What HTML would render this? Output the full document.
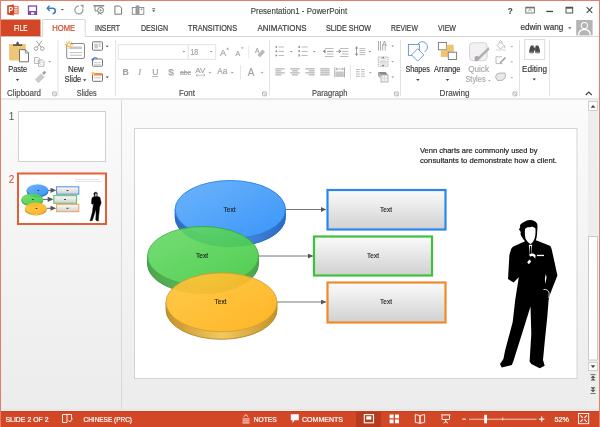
<!DOCTYPE html>
<html><head><meta charset="utf-8">
<style>
*{margin:0;padding:0}
html,body{width:600px;height:427px;overflow:hidden;background:#fff}
svg{position:absolute;left:0;top:0;font-family:"Liberation Sans",sans-serif;will-change:transform}
</style></head><body>
<svg width="600" height="427" viewBox="0 0 600 427">
<defs>
<linearGradient id="gBlue" x1="0" y1="0" x2="1" y2="1"><stop offset="0" stop-color="#6CB4FC"/><stop offset="1" stop-color="#3B95F8"/></linearGradient>
<linearGradient id="gBlueS" x1="0" y1="0" x2="1" y2="0"><stop offset="0" stop-color="#2A6CC4"/><stop offset=".5" stop-color="#4A8EE0"/><stop offset="1" stop-color="#2A6CC4"/></linearGradient>
<linearGradient id="gGreen" x1="0" y1="0" x2="1" y2="1"><stop offset="0" stop-color="#68DA68"/><stop offset="1" stop-color="#3FC93F"/></linearGradient>
<linearGradient id="gGreenS" x1="0" y1="0" x2="1" y2="0"><stop offset="0" stop-color="#369C36"/><stop offset=".5" stop-color="#52B852"/><stop offset="1" stop-color="#369C36"/></linearGradient>
<linearGradient id="gOr" x1="0" y1="0" x2="1" y2="1"><stop offset="0" stop-color="#FFC63E"/><stop offset="1" stop-color="#FFB014"/></linearGradient>
<linearGradient id="gOrS" x1="0" y1="0" x2="1" y2="0"><stop offset="0" stop-color="#C08A18"/><stop offset=".5" stop-color="#F2C452"/><stop offset="1" stop-color="#C08A18"/></linearGradient>
<linearGradient id="gMain" x1="0" y1="0" x2="0" y2="1"><stop offset="0" stop-color="#FBFBFB"/><stop offset="1" stop-color="#ECECEC"/></linearGradient>
<linearGradient id="gBox" x1="0" y1="0" x2="0" y2="1"><stop offset="0" stop-color="#FBFBFB"/><stop offset="1" stop-color="#D0D0D0"/></linearGradient>
<marker id="arr" viewBox="0 0 10 10" refX="10" refY="5" markerWidth="6" markerHeight="5" markerUnits="userSpaceOnUse" orient="auto"><path d="M0,0 L10,5 L0,10 Z" fill="#555"/></marker>
<g id="discs">
 <g>
  <path d="M175.1,209.5 v8 a55.2,29 0 0 0 110.4,0 v-8 z" fill="url(#gBlueS)" stroke="#2566BA" stroke-width="0.9"/>
  <ellipse cx="230.3" cy="209.5" rx="55.2" ry="29" fill="url(#gBlue)" stroke="#2D7EDC" stroke-width="0.9"/>
 </g>
 <g opacity="0.9">
  <path d="M147.5,256 v8 a55.5,29.5 0 0 0 111,0 v-8 z" fill="url(#gGreenS)" stroke="#2C8A2C" stroke-width="0.9"/>
  <ellipse cx="203" cy="256" rx="55.5" ry="29.5" fill="url(#gGreen)" stroke="#34A834" stroke-width="0.9"/>
 </g>
 <g opacity="0.92">
  <path d="M166,302.3 v7.5 a55.5,29.5 0 0 0 111,0 v-7.5 z" fill="url(#gOrS)" stroke="#A87A14" stroke-width="0.9"/>
  <ellipse cx="221.5" cy="302.3" rx="55.5" ry="29.5" fill="url(#gOr)" stroke="#D09A22" stroke-width="0.9"/>
 </g>
</g>
<g id="mansil">
 <path fill="#000" d="M528.7,220.2 C532,219.6 535.5,220.8 537,223.5 C538,226 537.2,228.5 537.2,231.5 C537,236 536.5,239 535.8,240.2 L543,243 L550.4,246 L551.6,249 L554.5,262 L557.4,275.5 L551.6,290.2 L549.5,296 L548.6,300 L547.3,317 L544.7,342 L543,360 L544.7,365.8 L539.7,368.3 L531.3,364 L529.6,361.5 L531.3,333.7 L530.5,306.5 L522,333.7 L513.5,360.7 L511.9,365 L501.7,367.5 L500,364 L503.4,359 L505.1,350.6 L512.7,321.9 L515.2,300 L518.8,277.3 L513.5,282.5 L508,279 L509.4,255 L511.1,249 L512.9,246.7 L525,241.3 L523.5,239.5 L521.5,236.5 L520.5,234 L520.8,232 L519,229.5 L520.2,227 L520,225 L522.5,222.8 L525,221.6 C526.5,220.6 527.5,220.3 528.7,220.2 Z"/>
</g>
<g id="man">
 <use href="#mansil"/>
 <path fill="#fff" d="M525,229 C526,227.6 527.5,227 529.5,227.2 C531,226.6 533.5,226.2 535.5,228.5 L535.5,233 C535.3,237 534.5,240 532,243 L530.5,244 C528.5,243 526.5,240.5 525.4,238.5 C524.8,235 524.8,231.5 525,229 Z"/>
 <path fill="#fff" d="M528.8,244.8 L532.2,244.8 L531.4,256 L529.8,256 Z"/>
 <path fill="#000" d="M529.9,246 L531.3,246 L531.6,254 L530.6,256 L529.7,254 Z"/>
 <rect x="537" y="254.8" width="7" height="1.3" fill="#fff"/>
 <path fill="#fff" d="M529.3,254.8 C531,253 534,252.8 535.6,255.3 L535.2,258.8 L533.8,256.8 C532.8,255.6 531.2,255.6 530,256.8 Z"/>
 <path fill="#fff" d="M527.2,262.2 L529.4,259.4 L531.2,261.6 L528.8,264.2 Z"/>
 <path fill="#fff" d="M545.7,274.3 L546.6,277 L545.4,284 L544.9,279 Z"/>
 <path fill="none" stroke="#fff" stroke-width="0.8" d="M543.4,289.6 C546,289 548.5,290 549.2,293 L548.8,298"/>
</g>
<g id="slide">
 <text x="420" y="152.8" font-size="7.9" fill="#1A1A1A" stroke="#1A1A1A" stroke-width="0.18" textLength="117.5" lengthAdjust="spacingAndGlyphs">Venn charts are commonly used by</text>
 <text x="420" y="162.7" font-size="7.9" fill="#1A1A1A" stroke="#1A1A1A" stroke-width="0.18" textLength="137" lengthAdjust="spacingAndGlyphs">consultants to demonstrate how a client.</text>
 <g stroke="#777" stroke-width="1">
 <line x1="286" y1="209.5" x2="326" y2="209.5" marker-end="url(#arr)"/>
 <line x1="258" y1="256" x2="313" y2="256" marker-end="url(#arr)"/>
 <line x1="277" y1="302" x2="326" y2="302" marker-end="url(#arr)"/>
 </g>
 <rect x="327.5" y="190" width="118" height="39.5" fill="url(#gBox)" stroke="#2A86EE" stroke-width="2.2"/>
 <rect x="314" y="236.5" width="118" height="39" fill="url(#gBox)" stroke="#3EC23E" stroke-width="2.2"/>
 <rect x="327.5" y="282.5" width="118" height="40" fill="url(#gBox)" stroke="#EE8A2C" stroke-width="2.2"/>
 <g font-size="6.5" fill="#1A1A1A" stroke="#1A1A1A" stroke-width="0.12" text-anchor="middle">
 <text x="386" y="211.5">Text</text>
 <text x="373" y="258">Text</text>
 <text x="386" y="304">Text</text>
 </g>
 <use href="#discs"/>
 <g font-size="6.5" fill="#1A1A1A" stroke="#1A1A1A" stroke-width="0.12" text-anchor="middle">
 <text x="229.5" y="211.5">Text</text>
 <text x="202" y="258">Text</text>
 <text x="220.5" y="304">Text</text>
 </g>
 <use href="#man"/>
</g>
<g id="thumb">
 <g fill="#E2E4E8">
 <rect x="75" y="179" width="24" height=".9"/>
 <rect x="75" y="181" width="27" height=".9"/>
 </g>
 <g fill="url(#gBox)" stroke-width="1">
 <rect x="56.6" y="186.8" width="22.2" height="7.4" stroke="#4A90E2"/>
 <rect x="53.8" y="195.7" width="22.8" height="7.6" stroke="#58C058"/>
 <rect x="56.6" y="204.3" width="22.2" height="7.4" stroke="#EDA060"/>
 </g>
 <g fill="#555">
 <rect x="48" y="189.9" width="3" height=".9"/><path d="M50.5,187.8 L56.2,190.35 L50.5,192.9 Z"/>
 <rect x="43" y="198.9" width="5" height=".9"/><path d="M47.7,196.8 L53.4,199.35 L47.7,201.9 Z"/>
 <rect x="47" y="207.8" width="4" height=".9"/><path d="M50.5,205.7 L56.2,208.25 L50.5,210.8 Z"/>
 </g>
 <g fill="#444">
 <rect x="66.5" y="190" width="2" height="1"/><rect x="64" y="199" width="2" height="1"/><rect x="66.5" y="207.8" width="2" height="1"/>
 </g>
 <g transform="translate(19,174.5) scale(0.1945) translate(-135,-129)"><use href="#discs"/><g stroke="#000" stroke-width="2.5"><use href="#mansil"/></g><path d="M525,229 C526,227.6 527.5,227 529.5,227.2 C531,226.6 533.5,226.2 535.5,228.5 L535.5,233 C535.3,237 534.5,240 532,243 L530.5,244 C528.5,243 526.5,240.5 525.4,238.5 C524.8,235 524.8,231.5 525,229 Z" fill="#fff" opacity=".7"/></g>
 <g fill="#333">
 <rect x="37.5" y="190" width="1.6" height="1"/><rect x="32" y="199" width="1.6" height="1"/><rect x="35.7" y="208" width="1.6" height="1"/>
 </g>
</g>
</defs>
<!-- ===== background regions ===== -->
<rect x="0" y="0" width="600" height="427" fill="#fff"/>
<rect x="0" y="99" width="600" height="312" fill="url(#gMain)"/>
<rect x="0" y="36" width="600" height="1" fill="#D6D6D6"/>
<rect x="0" y="98" width="600" height="2" fill="#E8E8E8"/>

<!-- ===== title bar ===== -->
<g id="title">

<!-- PowerPoint logo -->
<rect x="12.5" y="6" width="6.2" height="8.3" fill="#E77B5E"/>
<path d="M14.5,7.6 h3 M14.5,9.8 h3 M14.5,12 h3" stroke="#fff" stroke-width="1"/>
<path d="M7.2,5.5 L13.9,4.5 V15.6 L7.2,14.6 Z" fill="#D04423"/>
<path d="M9.4,12.8 V7.3 H11 C12.9,7.3 12.9,10.3 11,10.3 H9.4" fill="none" stroke="#fff" stroke-width="1.2"/>
<!-- save -->
<rect x="28.5" y="6" width="8" height="8.3" fill="none" stroke="#7B4AB2" stroke-width="1.3"/>
<rect x="28.5" y="11" width="8" height="3.3" fill="#7B4AB2"/>
<rect x="31" y="12.3" width="3.2" height="2" fill="#fff"/>
<!-- undo -->
<path d="M49.6,5.6 L47.2,8.3 L49.6,11" fill="none" stroke="#3A7CC0" stroke-width="1.4"/>
<path d="M47.6,8.3 H52.5 C56.2,8.3 56.2,13.4 52.5,13.6" fill="none" stroke="#3A7CC0" stroke-width="1.5"/>
<path d="M60.8,9 h3.2 l-1.6,1.6 z" fill="#555"/>
<!-- redo -->
<path d="M78.8,6 A4,4 0 1 0 82.6,8.6" fill="none" stroke="#A0A0A0" stroke-width="1.3"/>
<path d="M80,4.8 H83.6 V8.4 Z" fill="#A0A0A0"/>
<!-- from start -->
<rect x="93.4" y="5.3" width="10.8" height="1.1" fill="#555"/>
<path d="M95,6.4 V11 H97.5" fill="none" stroke="#666" stroke-width=".8"/>
<circle cx="100.6" cy="10.3" r="2.9" fill="#fff" stroke="#666" stroke-width=".9"/>
<path d="M99.8,8.8 L102,10.3 L99.8,11.8 Z" fill="#3BAA5A"/>
<path d="M97.5,14.6 L99.5,12.8 L101.5,14.6" fill="none" stroke="#666" stroke-width=".8"/>
<!-- new doc -->
<path d="M114.9,6 H119.5 L121.6,8.1 V14.2 H114.9 Z" fill="#fff" stroke="#666" stroke-width=".9"/>
<!-- touch -->
<rect x="132.3" y="7.5" width="11.5" height="6.8" fill="none" stroke="#888" stroke-width=".9"/>
<path d="M135.5,14 V7 C135.5,4.5 139.5,4.5 139.5,7 V14 Z" fill="#999"/>
<circle cx="141.6" cy="9.2" r=".7" fill="#2E7BD6"/>
<!-- qat customize -->
<rect x="152.2" y="8.4" width="3" height=".8" fill="#444"/>
<path d="M152.2,10.3 h3 l-1.5,1.8 z" fill="#444"/>
<!-- right controls -->
<text x="507.8" y="13.7" font-size="9.6" font-weight="bold" fill="#444" stroke="#444" stroke-width="0.1" textLength="5" lengthAdjust="spacingAndGlyphs">?</text>
<rect x="525.8" y="7.2" width="8.5" height="5.8" fill="none" stroke="#666" stroke-width=".9"/>
<rect x="525.8" y="7.2" width="8.5" height="1.2" fill="#666"/>
<path d="M528.3,11 L530,9.5 L531.7,11" fill="none" stroke="#666" stroke-width=".8"/>
<rect x="546.3" y="10.8" width="6.7" height="1.3" fill="#444"/>
<rect x="566" y="7.2" width="6.7" height="5.8" fill="none" stroke="#444" stroke-width=".9"/>
<rect x="566" y="7.2" width="6.7" height="1.4" fill="#444"/>
<path d="M586.6,7.2 L592.3,12.9 M592.3,7.2 L586.6,12.9" stroke="#444" stroke-width="1.1"/>
<text x="250.8" y="13.5" font-size="8.9" fill="#444" textLength="96.4" lengthAdjust="spacingAndGlyphs" stroke="#444" stroke-width="0.15">Presentation1 - PowerPoint</text>
</g>

<!-- ===== tabs ===== -->
<g id="tabs" font-size="8.6" fill="#3C3C3C" stroke="#3C3C3C" stroke-width="0.2">
<rect x="0" y="19.5" width="40.5" height="16.7" fill="#D24726" stroke="none"/>
<path d="M42.7,37 V19.5 H85.2 V37" fill="#fff" stroke="#D6D6D6" stroke-width="1"/><rect x="43.2" y="35" width="41.5" height="2.2" fill="#fff" stroke="none"/>
<text x="14" y="31.1" fill="#fff" stroke="#fff" textLength="13.4" lengthAdjust="spacingAndGlyphs">FILE</text>
<text x="52.2" y="31.1" fill="#D24726" stroke="#D24726" textLength="23" lengthAdjust="spacingAndGlyphs">HOME</text>
<text x="95" y="31.1" textLength="25" lengthAdjust="spacingAndGlyphs">INSERT</text>
<text x="141" y="31.1" textLength="27" lengthAdjust="spacingAndGlyphs">DESIGN</text>
<text x="188" y="31.1" textLength="49" lengthAdjust="spacingAndGlyphs">TRANSITIONS</text>
<text x="257.5" y="31.1" textLength="49" lengthAdjust="spacingAndGlyphs">ANIMATIONS</text>
<text x="326" y="31.1" textLength="45" lengthAdjust="spacingAndGlyphs">SLIDE SHOW</text>
<text x="391" y="31.1" textLength="26.8" lengthAdjust="spacingAndGlyphs">REVIEW</text>
<text x="438" y="31.1" textLength="18" lengthAdjust="spacingAndGlyphs">VIEW</text>
<text x="520.4" y="30.3" font-size="8.3" textLength="42.8" lengthAdjust="spacingAndGlyphs">edwin wang</text>
<path d="M568,27.3 h3.5 l-1.75,2 z" fill="#666" stroke="none"/>
<rect x="576.2" y="20" width="16.4" height="15.3" fill="#B4B4B4" stroke="none"/>
<g stroke="none" fill="#fff"><circle cx="584.4" cy="25.6" r="3.6"/><path d="M578,35.3 C578,30.5 580.5,29 584.4,29 C588.3,29 590.8,30.5 590.8,35.3 Z"/></g><circle cx="584.4" cy="25.6" r="2.6" fill="#B4B4B4" stroke="none"/><path d="M579.2,35.3 C579.4,31.5 581.3,30.2 584.4,30.2 C587.5,30.2 589.4,31.5 589.6,35.3 Z" fill="#B4B4B4" stroke="none"/>
</g>

<!-- ===== ribbon ===== -->
<g id="ribbon" font-size="8.2" fill="#4A4A4A">

<!-- Clipboard group -->
<path d="M9.1,44 H25.8 V60.6 H10.6 Q9.1,60.6 9.1,59 Z" fill="#EEC676"/>
<path d="M13,46 V44.2 H16 Q16.5,41.6 17.6,41.6 Q18.7,41.6 19.2,44.2 H22.2 V46 Z" fill="#5A5A5A"/>
<path d="M19.5,49.7 H25.3 L28.5,52.9 V61.8 H19.5 Z" fill="#fff" stroke="#666" stroke-width=".9"/>
<path d="M25.3,49.7 V52.9 H28.5" fill="none" stroke="#666" stroke-width=".7"/>
<text x="8.2" y="72.3" font-size="8.2" fill="#333" textLength="19" lengthAdjust="spacingAndGlyphs" stroke="#333" stroke-width="0.15">Paste</text>
<path d="M15.7,79 h3.6 l-1.8,2 z" fill="#444"/>
<g fill="none" stroke="#999" stroke-width=".9">
<circle cx="36" cy="48.6" r="1.8"/><circle cx="42.3" cy="48.6" r="1.8"/>
<path d="M37.2,47.2 L42,40.8 M41.1,47.2 L36.3,40.8"/>
<path d="M34.5,57.5 H38.5 L39.8,58.8 V63.5 H34.5 Z M38.5,60 H42.5 L44,61.5 V66.4 H38.5 Z" fill="#fff" stroke="#B0B0B0"/><path d="M35.8,60 h2.5 M35.8,61.8 h2.5 M39.8,62.5 h2.8 M39.8,64.3 h2.8" stroke="#C8C8C8" stroke-width=".6"/>
</g>
<path d="M48.4,61 h2.6 l-1.3,1.4 z" fill="#999"/>
<path d="M35,79.5 L41,73.5 L44.5,77 L38.5,83 Z" fill="#C4C4C4"/>
<path d="M36.5,79.5 L41.5,74.5 M38,81 L43,76" stroke="#E8E8E8" stroke-width=".6"/>
<path d="M42,73 L44.5,70.8 L46.2,72.5 L44,75 Z" fill="#A0A0A0"/>
<!-- Slides group -->
<rect x="66.7" y="43.5" width="17.8" height="15" rx="1.5" fill="#fff" stroke="#8A8A8A" stroke-width="1"/>
<rect x="70" y="46.5" width="12" height="2.6" fill="#C8C8C8"/>
<rect x="70" y="52.2" width="12" height=".9" fill="#B8B8B8"/>
<rect x="70" y="54.8" width="12" height=".9" fill="#B8B8B8"/>
<g stroke="#F0B030" stroke-width=".9"><circle cx="69.0" cy="44.8" r="2" fill="#FFF6DC"/><path d="M71.60,44.80 L73.20,44.80 M70.84,46.64 L71.97,47.77 M69.00,47.40 L69.00,49.00 M67.16,46.64 L66.03,47.77 M66.40,44.80 L64.80,44.80 M67.16,42.96 L66.03,41.83 M69.00,42.20 L69.00,40.60 M70.84,42.96 L71.97,41.83 "/></g>
<text x="67.9" y="72.3" font-size="8.2" fill="#333" textLength="15.9" lengthAdjust="spacingAndGlyphs" stroke="#333" stroke-width="0.15">New</text>
<text x="64.5" y="81.8" font-size="8.2" fill="#333" textLength="16.8" lengthAdjust="spacingAndGlyphs" stroke="#333" stroke-width="0.15">Slide</text>
<path d="M82.8,79.3 h3.6 l-1.8,2 z" fill="#444"/>
<rect x="92.5" y="41.8" width="10" height="8.4" rx=".8" fill="#fff" stroke="#666" stroke-width=".9"/>
<rect x="94.3" y="43.6" width="3.5" height="4.8" fill="#C8C8C8"/>
<rect x="98.6" y="43.6" width="2.3" height="1" fill="#AAA"/><rect x="98.6" y="45.6" width="2.3" height="1" fill="#AAA"/>
<path d="M105.7,45.7 h3 l-1.5,1.6 z" fill="#444"/>
<rect x="92.5" y="59" width="10" height="7.2" rx=".8" fill="#fff" stroke="#666" stroke-width=".9"/>
<path d="M94,62.5 h7 M94,64.3 h7" stroke="#BBB" stroke-width=".7"/>
<path d="M92.2,60.3 Q94,56.3 97.5,58.5" fill="none" stroke="#2E75C6" stroke-width="1.1"/>
<path d="M91,58.8 L92.5,61.5 L94.3,59.6 Z" fill="#2E75C6"/>
<rect x="92.5" y="73.8" width="10" height="7.5" rx=".8" fill="#fff" stroke="#666" stroke-width=".9"/>
<rect x="94" y="73" width="8.5" height="2.6" fill="#F08A54"/>
<path d="M94,77.8 h7" stroke="#AAA" stroke-width=".7"/>
<circle cx="93" cy="73.3" r="1.6" fill="#F6C760"/>
<path d="M105.7,76.6 h3 l-1.5,1.6 z" fill="#444"/>
<!-- Font group -->
<rect x="118.3" y="44.7" width="70" height="14.6" fill="#fff" stroke="#E3E3E3" stroke-width="1"/>
<rect x="188.3" y="44.7" width="27.4" height="14.6" fill="#fff" stroke="#E3E3E3" stroke-width="1"/>
<path d="M182.5,51 h2.8 l-1.4,1.5 z M209.8,51 h2.8 l-1.4,1.5 z" fill="#999"/>
<text x="190.4" y="55" font-size="8.8" fill="#A0A0A0" textLength="7.8" lengthAdjust="spacingAndGlyphs" stroke="#A0A0A0" stroke-width="0.15">18</text>
<g fill="#A0A0A0" stroke="#A0A0A0" stroke-width="0.15">
<text x="220" y="55.5" font-size="9.2">A</text>
<path d="M226.3,49.4 L227.6,47.6 L228.9,49.4 Z"/>
<text x="235.5" y="55.5" font-size="7">A</text>
<path d="M241.2,47.4 L242.4,49 L243.6,47.4 Z"/>
<rect x="248.4" y="45.3" width=".8" height="13.3" fill="#E2E2E2" stroke="none"/>
<text x="255" y="52.5" font-size="6.5">A</text>
<path d="M257.5,55 L262.5,49.5 L265,52 L260,57.3 Z" fill="#B8B8B8" stroke="none"/>
<text x="122.5" y="75.2" font-size="8.6" font-weight="bold">B</text>
<text x="138.3" y="75.2" font-size="8.8" font-style="italic" font-family="Liberation Serif">I</text>
<text x="152.2" y="75.2" font-size="8.6">U</text>
<rect x="152.3" y="76.2" width="5.8" height=".7"/>
<text x="168.8" y="76" font-size="8.6" fill="#C8C8C8" stroke="#C8C8C8" stroke-width="0.15">S</text>
<text x="168" y="75.2" font-size="8.6">S</text>
<text x="180" y="75.2" font-size="7.2" textLength="11" lengthAdjust="spacingAndGlyphs">abc</text>
<rect x="180" y="72.3" width="11" height=".7"/>
<text x="195.3" y="72.8" font-size="7.4" textLength="10" lengthAdjust="spacingAndGlyphs">AV</text>
<path d="M196,75.2 H205 M197.5,73.9 L196,75.2 L197.5,76.5 M203.5,73.9 L205,75.2 L203.5,76.5" fill="none" stroke="#A0A0A0" stroke-width=".6"/>
<path d="M208.7,72 h2.6 l-1.3,1.4 z"/>
<text x="217.3" y="74.2" font-size="8.8" textLength="10" lengthAdjust="spacingAndGlyphs">Aa</text>
<path d="M230.9,72 h2.6 l-1.3,1.4 z"/>
<rect x="240" y="65" width=".8" height="14.5" fill="#E2E2E2" stroke="none"/>
<text x="247.8" y="75.7" font-size="10.6" textLength="6.6" lengthAdjust="spacingAndGlyphs">A</text>
<path d="M260.7,72 h2.6 l-1.3,1.4 z"/>
</g>
<g fill="none" stroke="#999" stroke-width=".7"><path d="M52.5,95.5 V92 H56.3 V95.8 H53.0"/><path d="M53.7,93.2 L55.5,95" /><path d="M262.5,95.5 V92 H266.3 V95.8 H263.0"/><path d="M263.7,93.2 L265.5,95" /><path d="M394.5,95.5 V92 H398.3 V95.8 H395.0"/><path d="M395.7,93.2 L397.5,95" /><path d="M513,95.5 V92 H516.8 V95.8 H513.5"/><path d="M514.2,93.2 L516,95" /></g>
<!-- Paragraph group -->
<g fill="#8A8A8A">
<rect x="275.5" y="46.2" width="1.6" height="1.6"/><rect x="275.5" y="50.5" width="1.6" height="1.6"/><rect x="275.5" y="54.7" width="1.6" height="1.6"/>
<rect x="278.5" y="46.6" width="5.5" height=".8" fill="#AAA"/><rect x="278.5" y="50.9" width="5.5" height=".8" fill="#AAA"/><rect x="278.5" y="55.1" width="5.5" height=".8" fill="#AAA"/>
<path d="M290,51 h2.6 l-1.3,1.4 z"/>
<rect x="298.5" y="45.8" width="1.4" height="2.2"/><rect x="298.5" y="50" width="1.4" height="2.2"/><rect x="298.5" y="54.3" width="1.4" height="2.2"/>
<rect x="301.5" y="46.6" width="6.2" height=".8" fill="#AAA"/><rect x="301.5" y="50.9" width="6.2" height=".8" fill="#AAA"/><rect x="301.5" y="55.1" width="6.2" height=".8" fill="#AAA"/>
<path d="M313,51 h2.6 l-1.3,1.4 z"/>
<rect x="325" y="48" width="8.5" height=".8" fill="#AAA"/><rect x="327" y="50.9" width="6.5" height=".8"/><rect x="327" y="53.6" width="6.5" height=".8" fill="#AAA"/><rect x="325" y="56.2" width="8.5" height=".8" fill="#AAA"/>
<path d="M322.7,51.3 L325.5,49.2 V53.4 Z M328,51 h-3" />
<rect x="340" y="48" width="8.5" height=".8" fill="#AAA"/><rect x="342" y="50.9" width="6.5" height=".8" fill="#AAA"/><rect x="342" y="53.6" width="6.5" height=".8" fill="#AAA"/><rect x="340" y="56.2" width="8.5" height=".8" fill="#AAA"/>
<path d="M341.5,51.3 L338.7,49.2 V53.4 Z M336.5,50.9 h3 v.8 h-3 z"/>
<path d="M356.6,46.3 L358.3,48.5 H354.9 Z M356.6,56 L358.3,53.8 H354.9 Z M356.2,48.5 h.8 v5.3 h-.8 z"/>
<rect x="359.5" y="48.3" width="5.8" height=".8" fill="#AAA"/><rect x="359.5" y="50.3" width="5.8" height=".8" fill="#AAA"/><rect x="359.5" y="52.3" width="5.8" height=".8" fill="#AAA"/><rect x="359.5" y="54.3" width="5.8" height=".8" fill="#AAA"/>
<path d="M368.6,51 h2.6 l-1.3,1.4 z"/>
<rect x="275.3" y="68.5" width="9.4" height=".8"/><rect x="275.3" y="70.5" width="6" height=".8"/><rect x="275.3" y="72.5" width="9.4" height=".8"/><rect x="275.3" y="74.5" width="6" height=".8"/>
<rect x="290.3" y="68.5" width="9.4" height=".8"/><rect x="292" y="70.5" width="6" height=".8"/><rect x="290.3" y="72.5" width="9.4" height=".8"/><rect x="292" y="74.5" width="6" height=".8"/>
<rect x="305.3" y="68.5" width="9.4" height=".8"/><rect x="308.7" y="70.5" width="6" height=".8"/><rect x="305.3" y="72.5" width="9.4" height=".8"/><rect x="308.7" y="74.5" width="6" height=".8"/>
<rect x="320.3" y="68.5" width="9.4" height=".8"/><rect x="320.3" y="70.5" width="9.4" height=".8"/><rect x="320.3" y="72.5" width="9.4" height=".8"/><rect x="320.3" y="74.5" width="9.4" height=".8"/>
<rect x="334.5" y="67.3" width=".7" height="10"/><rect x="344" y="67.3" width=".7" height="10"/>
<rect x="335.5" y="71.5" width="8.3" height="5.5" fill="#C8C8C8"/>
<path d="M336,69 H343.5 M337.3,67.9 L336,69 L337.3,70.1 M342.2,67.9 L343.5,69 L342.2,70.1" fill="none" stroke="#8A8A8A" stroke-width=".6"/>
<rect x="350" y="65" width=".8" height="14.5" fill="#E2E2E2" stroke="none"/>
<rect x="356" y="69.2" width="3.8" height=".8" fill="#AAA"/><rect x="360.9" y="69.2" width="3.8" height=".8" fill="#AAA"/>
<rect x="356" y="71.4" width="3.8" height=".8" fill="#AAA"/><rect x="360.9" y="71.4" width="3.8" height=".8" fill="#AAA"/>
<rect x="356" y="73.6" width="3.8" height=".8" fill="#AAA"/><rect x="360.9" y="73.6" width="3.8" height=".8" fill="#AAA"/>
<rect x="356" y="75.8" width="3.8" height=".8" fill="#AAA"/><rect x="360.9" y="75.8" width="3.8" height=".8" fill="#AAA"/>
<path d="M369,72.2 h2.6 l-1.3,1.4 z"/>
<rect x="378" y="41" width=".7" height="9.5"/><rect x="380.2" y="41" width=".7" height="9.5"/><rect x="382.4" y="45" width=".7" height="5.5"/><rect x="384.8" y="45" width=".7" height="5.5"/>
<text x="382.2" y="46" font-size="6.5" fill="#999" stroke="#999" stroke-width="0.15">A</text>
<path d="M391.4,45.6 h2.6 l-1.3,1.4 z"/>
<rect x="378.3" y="57" width="9.7" height="9.3" fill="#F4F0F6" stroke="#999" stroke-width=".7" stroke-dasharray="1.5,.8"/>
<path d="M383.1,56.5 L384.8,58.6 H381.4 Z M383.1,66.8 L384.8,64.7 H381.4 Z"/>
<rect x="380" y="60.8" width="6.4" height=".6" fill="#BBB"/><rect x="380" y="62.6" width="6.4" height=".6" fill="#BBB"/>
<path d="M391.4,61.2 h2.6 l-1.3,1.4 z"/>
<path d="M378,72 H385.5 L388,74.7 H380.5 Z" fill="#8A8A8A"/>
<path d="M378,72 L380.5,74.7 V78 L378,76 Z" fill="#AAA"/>
<rect x="381" y="75" width="7" height="7" fill="#F4F0F6" stroke="#999" stroke-width=".7"/>
<path d="M384.5,75.5 V81.5 M381.5,78.5 H387.5" stroke="#CCC" stroke-width=".5"/>
<path d="M391.4,76.6 h2.6 l-1.3,1.4 z"/>
</g>
<!-- Drawing group -->
<g fill="none" stroke="#5B92D4" stroke-width=".9">
<rect x="408.4" y="44.4" width="11" height="11"/>
<path d="M417.6,44.4 A5.3,5.3 0 1 1 424.5,51.8"/>
<path d="M417.7,48.7 L423.9,54.9 L417.7,61.1 L411.5,54.9 Z" fill="#fff"/>
</g>
<text x="405.4" y="71.9" font-size="8.2" fill="#333" textLength="24.5" lengthAdjust="spacingAndGlyphs" stroke="#333" stroke-width="0.15">Shapes</text>
<path d="M416.1,79 h3.6 l-1.8,2 z" fill="#444"/>
<rect x="438.4" y="42.5" width="8" height="7.3" fill="#fff" stroke="#777" stroke-width=".9"/>
<path d="M446.5,44.7 H453.7 V52 H448 V57.1 H440.8 V49.9 H446.5 Z" fill="#EFC46E"/>
<rect x="448.3" y="52.2" width="8.3" height="7.3" fill="#fff" stroke="#777" stroke-width=".9"/>
<text x="434" y="71.9" font-size="8.2" fill="#333" textLength="26.4" lengthAdjust="spacingAndGlyphs" stroke="#333" stroke-width="0.15">Arrange</text>
<path d="M445.7,79 h3.6 l-1.8,2 z" fill="#444"/>
<rect x="469.5" y="42.7" width="17.6" height="18" rx="3.5" fill="#F3EFF5" stroke="#CCC" stroke-width=".8"/>
<path d="M474,61 L488.6,47 L489.5,49.5 L477.5,61.2 Z" fill="#B0B0B0"/>
<circle cx="476.8" cy="58.2" r="2.3" fill="#A8A8A8"/>
<text x="468.2" y="72.3" font-size="8.2" fill="#A8A8A8" textLength="20.8" lengthAdjust="spacingAndGlyphs" stroke="#A8A8A8" stroke-width="0.15">Quick</text>
<text x="465.4" y="82.4" font-size="8.2" fill="#A8A8A8" textLength="20.2" lengthAdjust="spacingAndGlyphs" stroke="#A8A8A8" stroke-width="0.15">Styles</text>
<path d="M488,80 h2.6 l-1.3,1.4 z" fill="#AAA"/>
<path d="M497,45.5 L500.5,42 L504,45.5 L500.5,49 Z" fill="#fff" stroke="#AAA" stroke-width=".8"/>
<path d="M499,42.3 L500.5,40.5 L502.5,42.5" fill="none" stroke="#AAA" stroke-width=".8"/>
<path d="M504,45 Q506,47.5 505,48.5 Q504,47.5 504,45 Z" fill="#AAA"/>
<rect x="495.7" y="49.2" width="10.1" height="1.4" fill="#E0E0E0"/>
<path d="M510.5,46 h2.6 l-1.3,1.4 z" fill="#AAA"/>
<path d="M502,56.8 H496 V63.6 H502.6" fill="none" stroke="#AAA" stroke-width=".8"/>
<path d="M499.5,62.5 L505,57 L506,58 L500.5,63.5 Z" fill="#999"/>
<path d="M510.5,61.5 h2.6 l-1.3,1.4 z" fill="#AAA"/>
<path d="M495.5,77 Q496,73 500,73 H505 L505.5,75.5 Q505,80.5 500.5,80.5 H497.5 Z" fill="#E8E8E8" stroke="#A8A8A8" stroke-width=".8"/>
<path d="M510.5,77 h2.6 l-1.3,1.4 z" fill="#AAA"/>
<!-- Editing group -->
<rect x="524.7" y="39.5" width="20" height="20" fill="#fff" stroke="#D8D8D8" stroke-width=".9"/>
<g fill="#4A4A4A">
<path d="M529.2,52.8 C529,50 530,47.5 531,45.5 H533.6 L534,50.5 V52.8 Z"/>
<path d="M540,52.8 C540.2,50 539.2,47.5 538.2,45.5 H535.6 L535.2,50.5 V52.8 Z"/>
<rect x="533.5" y="47.5" width="2.2" height="3"/>
</g>
<g fill="#888"><ellipse cx="531.6" cy="52.6" rx="2.1" ry="1"/><ellipse cx="537.6" cy="52.6" rx="2.1" ry="1"/></g>
<text x="522" y="72" font-size="8.2" fill="#333" textLength="25" lengthAdjust="spacingAndGlyphs" stroke="#333" stroke-width="0.15">Editing</text>
<path d="M532.4,78.6 h3.6 l-1.8,2 z" fill="#444"/>
<path d="M585.8,95 L588.8,92 L591.8,95" fill="none" stroke="#444" stroke-width="1.1"/>
<text x="7" y="96" textLength="34" lengthAdjust="spacingAndGlyphs" stroke="#4A4A4A" stroke-width="0.15">Clipboard</text>
<text x="76.8" y="96" textLength="19.8" lengthAdjust="spacingAndGlyphs" stroke="#4A4A4A" stroke-width="0.15">Slides</text>
<text x="179" y="96" textLength="15.9" lengthAdjust="spacingAndGlyphs" stroke="#4A4A4A" stroke-width="0.15">Font</text>
<text x="312" y="96" textLength="35.4" lengthAdjust="spacingAndGlyphs" stroke="#4A4A4A" stroke-width="0.15">Paragraph</text>
<text x="439.5" y="96" textLength="30" lengthAdjust="spacingAndGlyphs" stroke="#4A4A4A" stroke-width="0.15">Drawing</text>
<g fill="#E2E2E2">
<rect x="57.5" y="40" width="1" height="56"/>
<rect x="115" y="40" width="1" height="56"/>
<rect x="269" y="40" width="1" height="56"/>
<rect x="400" y="40" width="1" height="56"/>
<rect x="519" y="40" width="1" height="56"/>
<rect x="549" y="40" width="1" height="56"/>
</g>
</g>

<!-- ===== panes ===== -->
<rect x="121" y="100" width="1" height="311" fill="#D8D8D8"/>
<rect x="134.5" y="128.5" width="442.5" height="250" fill="#fff" stroke="#D4D4D4" stroke-width="1"/>
<use href="#slide"/>
<!-- thumbnails -->
<rect x="18.5" y="111.5" width="87" height="50" fill="#fff" stroke="#D0D0D0" stroke-width="1"/>
<text x="8.8" y="119.5" font-size="10" fill="#555">1</text>
<rect x="18" y="173.5" width="88" height="50.5" fill="#fff" stroke="#E65E36" stroke-width="2"/>
<use href="#thumb"/>
<text x="8.8" y="183" font-size="10" fill="#D24726">2</text>
<!-- scrollbar -->
<rect x="588" y="100" width="10" height="311" fill="#EDEDED"/>
<rect x="588.5" y="101.5" width="9" height="9" fill="#fff" stroke="#CFCFCF" stroke-width="1"/>
<path d="M590.6,107.8 L593,105 L595.4,107.8 Z" fill="#444"/>
<rect x="588.5" y="236.5" width="9" height="123.5" fill="#fff" stroke="#C8C8C8" stroke-width="1"/>
<rect x="588.5" y="362.5" width="9" height="8" fill="#fff" stroke="#CFCFCF" stroke-width="1"/>
<path d="M590.6,365.2 L593,368 L595.4,365.2 Z" fill="#444"/>
<path d="M590.5,378 L593,375.5 L595.5,378 Z M590.5,380.5 L593,378 L595.5,380.5 Z" fill="#555"/>
<rect x="590.5" y="374.3" width="5" height=".8" fill="#555"/>
<path d="M590.5,387.3 L593,389.8 L595.5,387.3 Z M590.5,389.8 L593,392.3 L595.5,389.8 Z" fill="#555"/>
<rect x="590.5" y="393" width="5" height=".8" fill="#555"/>

<!-- ===== status bar ===== -->
<g id="status" font-size="7.7" fill="#fff">
<rect x="0" y="411" width="600" height="16" fill="#D24726"/>

<!-- spell check book icon -->
<g fill="none" stroke="#fff" stroke-width=".9">
<path d="M62.5,414.5 H67 V422.5 H62.5 Z M67,414.5 H71.5 V419"/>
<path d="M68.5,420.5 L69.8,422 L72.5,418.5"/>
</g>
<!-- notes icon -->
<path d="M243.6,416.8 L245.9,414.6 L248.2,416.8" fill="none" stroke="#fff" stroke-width=".9"/>
<rect x="242.5" y="418.5" width="7" height=".9" fill="#fff"/><rect x="242.5" y="420.5" width="7" height=".9" fill="#fff"/><rect x="242.5" y="422.5" width="7" height=".9" fill="#fff"/>
<!-- comments icon -->
<path d="M290.8,414.2 H298.8 V420.3 H294.5 L292.5,423.2 V420.3 H290.8 Z" fill="#fff"/>
<!-- normal view highlighted -->
<rect x="356" y="411" width="25" height="16" fill="#B73C1F"/>
<rect x="364.3" y="414.6" width="9.2" height="8.2" fill="none" stroke="#fff" stroke-width="1.1"/>
<rect x="366.3" y="416.3" width="5" height="3.3" fill="#fff"/>
<!-- sorter -->
<rect x="389.6" y="414.5" width="4" height="3.8" fill="#fff"/><rect x="395" y="414.5" width="4" height="3.8" fill="#fff"/>
<rect x="389.6" y="419.5" width="4" height="3.8" fill="#fff"/><rect x="395" y="419.5" width="4" height="3.8" fill="#fff"/>
<!-- reading view -->
<path d="M415.3,414.5 L419.8,415.5 V423.3 L415.3,422.3 Z M420.2,415.5 L424.6,414.5 V422.3 L420.2,423.3 Z" fill="none" stroke="#fff" stroke-width=".9"/>
<!-- slide show -->
<rect x="441" y="414.4" width="9.4" height="1" fill="#fff"/>
<path d="M442,415.5 V419.5 H449.5 V415.5" fill="none" stroke="#fff" stroke-width=".9"/>
<path d="M445.7,419.5 V422.5 M443.5,423.2 L445.7,421.5 L448,423.2" fill="none" stroke="#fff" stroke-width=".9"/>
<!-- zoom slider -->
<rect x="462.3" y="418.6" width="3.6" height="1" fill="#fff"/>
<rect x="469" y="418.8" width="67.7" height=".7" fill="#fff"/>
<rect x="484.2" y="414.8" width="2.8" height="8.5" fill="#fff"/>
<rect x="502.4" y="417.5" width=".8" height="3" fill="#fff"/>
<rect x="539" y="418.6" width="5.4" height="1.1" fill="#fff"/><rect x="541.2" y="416.4" width="1.1" height="5.4" fill="#fff"/>
<!-- fit -->
<rect x="578.5" y="413.5" width="10.2" height="10.2" fill="none" stroke="#fff" stroke-width=".9"/>
<path d="M580.3,415.3 L582.8,417.8 M586.9,415.3 L584.4,417.8 M580.3,421.9 L582.8,419.4 M586.9,421.9 L584.4,419.4" stroke="#fff" stroke-width="1.1"/>
<rect x="0" y="409" width="600" height="1" fill="#E3E3E3"/><rect x="0" y="410" width="600" height="1" fill="#EAF6F8"/><rect x="0" y="411" width="600" height="1" fill="#D03A16"/>
<text x="5.5" y="421.8" textLength="43" lengthAdjust="spacingAndGlyphs" stroke="#fff" stroke-width="0.2">SLIDE 2 OF 2</text>
<text x="83.5" y="421.8" textLength="48.5" lengthAdjust="spacingAndGlyphs" stroke="#fff" stroke-width="0.2">CHINESE (PRC)</text>
<text x="253.75" y="421.8" textLength="23" lengthAdjust="spacingAndGlyphs" stroke="#fff" stroke-width="0.2">NOTES</text>
<text x="302" y="421.8" textLength="41" lengthAdjust="spacingAndGlyphs" stroke="#fff" stroke-width="0.2">COMMENTS</text>
<text x="554.6" y="421.8" textLength="14.4" lengthAdjust="spacingAndGlyphs" stroke="#fff" stroke-width="0.2">52%</text>
</g>

<!-- ===== window border ===== -->
<rect x="0" y="0" width="600" height="1" fill="#E0806A"/>
<rect x="0" y="0" width="1" height="427" fill="#E0806A"/>
<rect x="599" y="0" width="1" height="427" fill="#E0806A"/>
</svg>
</body></html>
